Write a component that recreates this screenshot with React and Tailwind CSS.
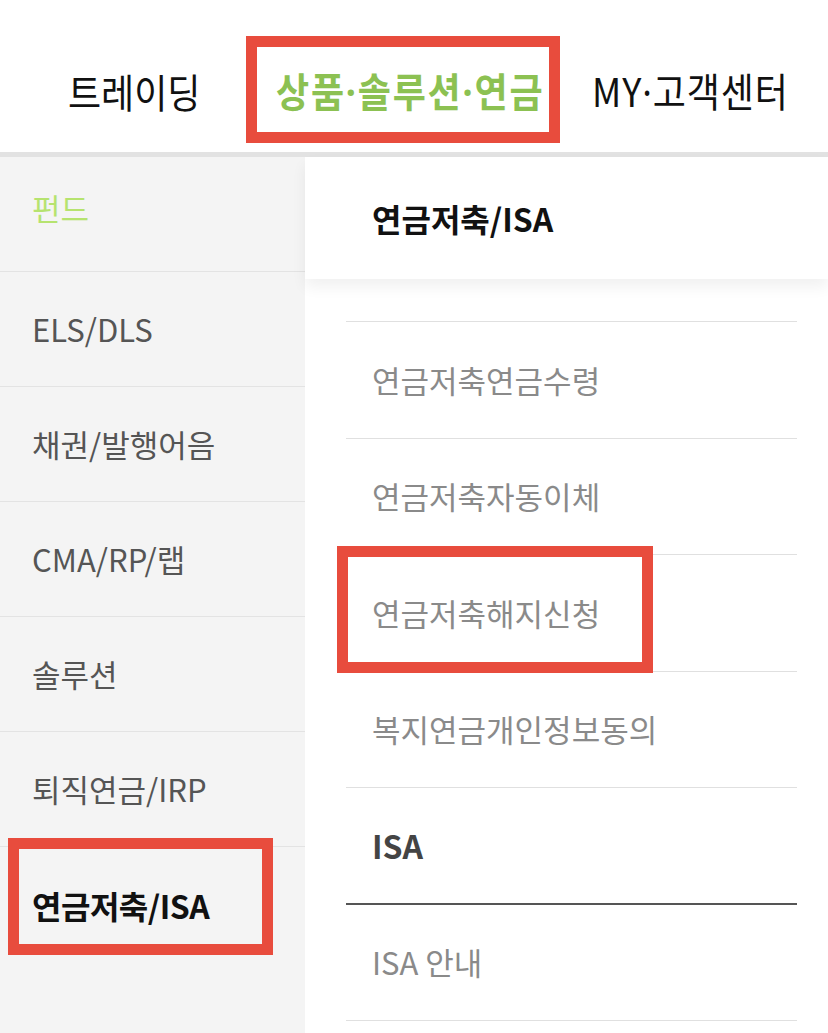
const FONT = { fontFamily: '"Noto Sans CJK KR", "Noto Sans", sans-serif' }

const leftMenu = [
  { label: '펀드', tone: 'text-[#b6e36f]' },
  { label: 'ELS/DLS' },
  { label: '채권/발행어음' },
  { label: 'CMA/RP/랩' },
  { label: '솔루션' },
  { label: '퇴직연금/IRP' },
  { label: '연금저축/ISA', active: true },
]

const subItems = ['연금저축연금수령', '연금저축자동이체', '연금저축해지신청', '복지연금개인정보동의']

function Dot() {
  return <span style={{ fontFamily: '"Noto Sans", sans-serif' }}>·</span>
}

function Highlight({ className }) {
  return <div className={`absolute border-[11px] border-[#e84c3d] pointer-events-none ${className}`} />
}

export default function App() {
  return (
    <div className="relative w-[828px] h-[1033px] overflow-hidden bg-white" style={FONT}>
      {/* top nav */}
      <div className="h-[152px] flex items-center pt-[30px] pl-[68px] text-[40px] leading-none">
        <div className="w-[208px]">
          <span className="inline-block origin-left scale-x-[0.9] text-[#111]">트레이딩</span>
        </div>
        <div className="w-[316px]">
          <span className="inline-block origin-left scale-x-[0.9] whitespace-nowrap text-[#8cc152] font-bold tracking-[2px]">
            상품<Dot />솔루션<Dot />연금
          </span>
        </div>
        <div>
          <span className="inline-block origin-left scale-x-[0.9] whitespace-nowrap text-[#111] tracking-[1px]">
            MY<Dot />고객센터
          </span>
        </div>
      </div>
      <div className="h-[5px] bg-[#e2e2e2]" />

      <div className="flex">
        {/* left category list */}
        <div className="w-[305px] h-[880px] bg-[#f4f4f4]">
          {leftMenu.map((m) => (
            <div
              key={m.label}
              className={`h-[115px] flex items-center pl-8 ${
                m.active
                  ? 'text-[32px] font-bold text-[#111] tracking-[-0.5px]'
                  : `border-b border-[#e3e3e3] text-[31px] ${m.tone || 'text-[#555]'}`
              }`}
            >
              <span className={m.label === '펀드' ? '-mt-[12px]' : ''}>{m.label}</span>
            </div>
          ))}
        </div>

        {/* right sub menu */}
        <div className="flex-1 bg-white">
          <div className="h-[122px] flex items-center pl-[67px] text-[32px] font-bold text-[#111] shadow-[0_8px_14px_rgba(0,0,0,0.06)]">
            연금저축/ISA
          </div>
          <div className="mt-[42px] ml-[41px] mr-[31px] border-t border-[#e0e0e0]">
            {subItems.map((s) => (
              <div key={s} className="h-[116.5px] flex items-center pl-[26px] border-b border-[#e0e0e0] text-[31px] text-[#8a8a8a]">
                {s}
              </div>
            ))}
            <div className="h-[116.5px] flex items-center pl-[26px] border-b-2 border-[#555] text-[32px] font-bold text-[#444]">
              ISA
            </div>
            <div className="h-[116.5px] flex items-center pl-[26px] border-b border-[#e0e0e0] text-[31px] text-[#8a8a8a]">
              ISA 안내
            </div>
          </div>
        </div>
      </div>

      <Highlight className="left-[246px] top-[36px] w-[314px] h-[107px]" />
      <Highlight className="left-[337px] top-[546px] w-[316px] h-[127px]" />
      <Highlight className="left-[8px] top-[838px] w-[265px] h-[117px]" />
    </div>
  )
}
